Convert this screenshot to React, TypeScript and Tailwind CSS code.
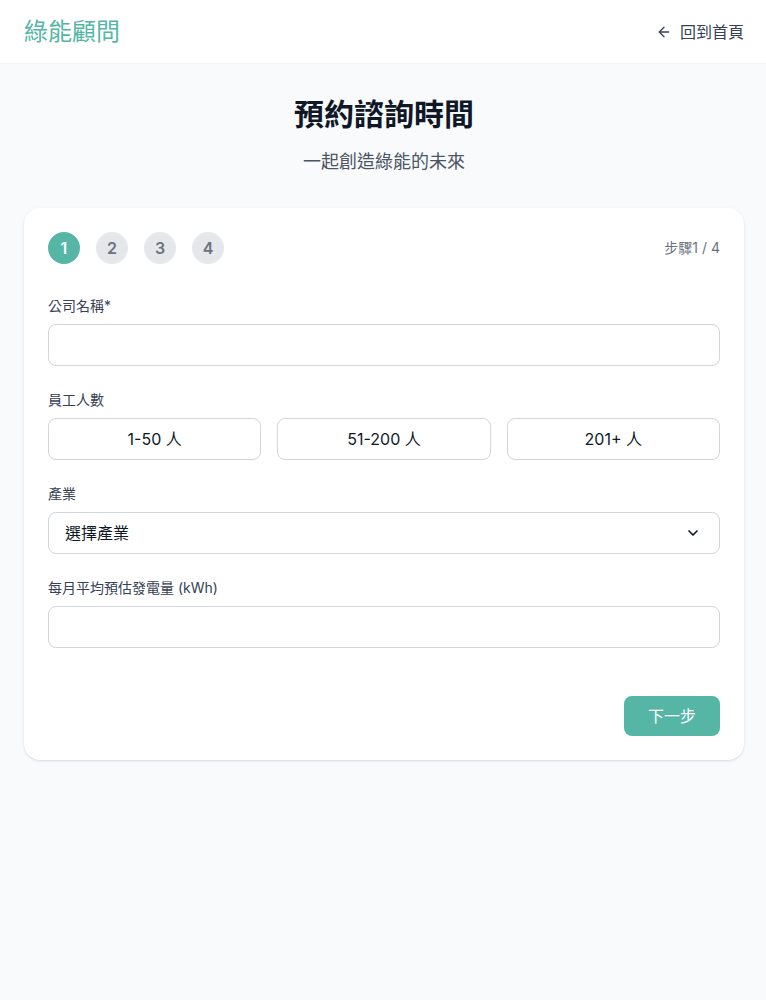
import { ArrowLeft, ChevronDown } from 'lucide-react';

const font = { fontFamily: "Inter, 'Noto Sans CJK TC', sans-serif" };

const Header = () => {
  return (
    <div className="h-16 border-b border-gray-100 bg-white">
      <div className="flex h-16 items-center justify-between px-6">
        <h1 className="text-2xl font-normal text-[#55b6a6]">綠能顧問</h1>
        <a href="#" className="flex items-center gap-2 text-base text-gray-700">
          <ArrowLeft size={16} strokeWidth={2} />
          回到首頁
        </a>
      </div>
    </div>
  );
};

const Steps = () => {
  return (
    <div className="mb-8 flex items-center justify-between">
      <div className="flex items-center gap-4">
        {[1, 2, 3, 4].map((n) => (
          <div
            key={n}
            className={
              n === 1
                ? 'flex h-8 w-8 items-center justify-center rounded-full bg-[#55b6a6] text-base font-semibold text-white'
                : 'flex h-8 w-8 items-center justify-center rounded-full bg-gray-200 text-base font-semibold text-gray-500'
            }
          >
            {n}
          </div>
        ))}
      </div>
      <span className="text-sm text-gray-500">步驟1 / 4</span>
    </div>
  );
};

export default function App() {
  return (
    <div className="min-h-screen overflow-hidden bg-gray-50" style={font}>
      <div className="w-[768px]">
        <Header />
        <main className="px-6 pt-8 pb-12">
          <div className="mb-8 text-center">
            <h2 className="text-3xl font-bold text-gray-900">預約諮詢時間</h2>
            <p className="mt-4 text-lg text-gray-600">一起創造綠能的未來</p>
          </div>

          <div className="rounded-2xl bg-white p-6 shadow-sm">
            <Steps />

            <div className="space-y-6">
              <div>
                <label className="mb-2 block text-sm text-gray-700">公司名稱*</label>
                <input className="h-[42px] w-full rounded-lg border border-gray-300 px-4 outline-none" />
              </div>

              <div>
                <label className="mb-2 block text-sm text-gray-700">員工人數</label>
                <div className="grid grid-cols-3 gap-4">
                  {['1-50 人', '51-200 人', '201+ 人'].map((s) => (
                    <button
                      key={s}
                      className="h-[42px] rounded-lg border border-gray-300 bg-white text-base text-gray-900"
                    >
                      {s}
                    </button>
                  ))}
                </div>
              </div>

              <div>
                <label className="mb-2 block text-sm text-gray-700">產業</label>
                <div className="flex h-[42px] w-full items-center justify-between rounded-lg border border-gray-300 px-4 text-base text-gray-900">
                  <span>選擇產業</span>
                  <ChevronDown size={16} strokeWidth={2.5} className="mr-[2px]" />
                </div>
              </div>

              <div>
                <label className="mb-2 block text-sm text-gray-700">每月平均預估發電量 (kWh)</label>
                <input className="h-[42px] w-full rounded-lg border border-gray-300 px-4 outline-none" />
              </div>
            </div>

            <div className="mt-12 flex justify-end">
              <button className="rounded-lg bg-[#55b6a6] px-6 py-2 text-base text-white">下一步</button>
            </div>
          </div>
        </main>
      </div>
    </div>
  );
}
